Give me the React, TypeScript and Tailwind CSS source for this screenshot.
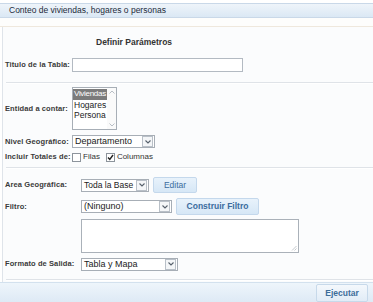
import React from "react";

const font = { fontFamily: '"Liberation Sans", Arial, sans-serif' };

function Chevron() {
  return (
    <span className="flex h-[11px] w-[11px] shrink-0 items-center justify-center border border-[#b9c0c8] bg-[#f4f6f8]">
      <svg width="6" height="4" viewBox="0 0 6 4">
        <path d="M0.5 0.5 L3 3 L5.5 0.5" fill="none" stroke="#56606b" strokeWidth="1.1" />
      </svg>
    </span>
  );
}

function Select({ value, width, text = "text-[9px]" }: { value: string; width: string; text?: string }) {
  return (
    <div
      className={`flex h-[13px] items-center justify-between border border-[#a7aeb6] bg-white pl-[2px] pr-[1px] leading-none text-[#222] ${text} ${width}`}
    >
      <span className="whitespace-nowrap">{value}</span>
      <Chevron />
    </div>
  );
}

function Label({ children, w }: { children: React.ReactNode; w: string }) {
  return (
    <span
      className={`shrink-0 whitespace-nowrap pl-[2px] text-[7.5px] font-bold leading-none tracking-[0.1px] text-[#3a3a3a] ${w}`}
    >
      {children}
    </span>
  );
}

function Sep() {
  return <div className="ml-[3px] h-[2px] border-t border-[#dfe3e8] bg-white" />;
}

function Check({ checked }: { checked?: boolean }) {
  return (
    <span className="flex h-[9px] w-[9px] items-center justify-center border border-[#8d949c] bg-white">
      {checked && (
        <svg width="7" height="7" viewBox="0 0 7 7">
          <path d="M1 3.5 L2.8 5.5 L6 1" fill="none" stroke="#222" strokeWidth="1.4" />
        </svg>
      )}
    </span>
  );
}

export default function App() {
  return (
    <div className="h-[302px] w-[373px] overflow-hidden bg-white" style={font}>
      <div className="pt-[3px]">
        <div className="flex h-[15px] items-center border-y border-[#c9d8e8] bg-gradient-to-b from-[#eef4fa] to-[#dbe8f4] pl-[9px] text-[8.5px] text-[#1d2b3a]">
          Conteo de viviendas, hogares o personas
        </div>
      </div>
      <div className="h-[9px] border-b border-[#efe8dd] bg-[#fdfdfc]" />

      <div className="ml-[2px] h-[255px] border-l border-[#dfe4ea] bg-[#fbfcfd]">
        <div className="h-[8px]" />
        <div className="flex h-[14px] items-center pl-[93px] text-[8.5px] font-bold text-[#333]">
          Definir Parámetros
        </div>

        <div className="mt-[9px] flex h-[14px] items-center">
          <Label w="w-[69px]">Titulo de la Tabla:</Label>
          <div className="h-[14px] w-[171px] border border-[#b3bac2] bg-white" />
        </div>

        <div className="mt-[10px]">
          <Sep />
        </div>

        <div className="mt-[3px] flex h-[43px] items-center">
          <Label w="w-[69px]">Entidad a contar:</Label>
          <div className="flex h-[43px] w-[45px] border border-[#a7aeb6] bg-white">
            <div className="flex w-[34px] flex-col pt-[1px] text-[8.5px] leading-[10.5px] text-[#222]">
              <span className="w-[34px] whitespace-nowrap bg-[#7b7b7b] pl-[1px] text-[8px] tracking-[-0.3px] text-white">
                Viviendas
              </span>
              <span className="whitespace-nowrap pl-[1px]">Hogares</span>
              <span className="whitespace-nowrap pl-[1px]">Persona</span>
            </div>
            <div className="flex w-[9px] flex-col items-center justify-between bg-[#fafafa] py-[2px]">
              <svg width="6" height="4" viewBox="0 0 6 4">
                <path d="M0.5 3.5 L3 1 L5.5 3.5" fill="none" stroke="#b8bec5" strokeWidth="1" />
              </svg>
              <svg width="6" height="4" viewBox="0 0 6 4">
                <path d="M0.5 0.5 L3 3 L5.5 0.5" fill="none" stroke="#b8bec5" strokeWidth="1" />
              </svg>
            </div>
          </div>
        </div>

        <div className="mt-[5px] flex h-[13px] items-center">
          <Label w="w-[69px]">Nivel Geográfico:</Label>
          <Select value="Departamento" width="w-[83px]" />
        </div>

        <div className="mt-[4px] flex h-[10px] items-center">
          <Label w="w-[69px]">Incluir Totales de:</Label>
          <Check />
          <span className="ml-[2px] mr-[6px] text-[8px] text-[#333]">Filas</span>
          <Check checked />
          <span className="ml-[2px] text-[8px] text-[#333]">Columnas</span>
        </div>

        <div className="mt-[5px]">
          <Sep />
        </div>

        <div className="mt-[8px] flex h-[16px] items-center">
          <Label w="w-[78px]">Area Geográfica:</Label>
          <Select value="Toda la Base" width="w-[68px]" text="text-[8.5px]" />
          <button className="ml-[4px] h-[16px] w-[44px] rounded-[2px] border border-[#c4d8ec] bg-gradient-to-b from-[#e8f2fb] to-[#d6e7f6] text-[8.5px] text-[#3b6c9e]">
            Editar
          </button>
        </div>

        <div className="mt-[5px] flex h-[17px] items-center">
          <Label w="w-[78px]">Filtro:</Label>
          <Select value="(Ninguno)" width="w-[91px]" />
          <button className="ml-[4px] h-[17px] w-[83px] rounded-[2px] border border-[#c4d8ec] bg-gradient-to-b from-[#e8f2fb] to-[#d6e7f6] text-[8.5px] font-bold text-[#3b6c9e]">
            Construir Filtro
          </button>
        </div>

        <div className="mt-[4px] flex h-[34px]">
          <div className="w-[78px] shrink-0" />
          <div className="relative h-[34px] w-[218px] border border-[#aab1b9] bg-white">
            <svg className="absolute bottom-[1px] right-[1px]" width="6" height="6" viewBox="0 0 6 6">
              <path d="M1 5.5 L5.5 1 M3.5 5.5 L5.5 3.5" stroke="#b5bbc2" strokeWidth="0.8" />
            </svg>
          </div>
        </div>

        <div className="mt-[5px] flex h-[12px] items-center">
          <Label w="w-[78px]">Formato de Salida:</Label>
          <Select value="Tabla y Mapa" width="w-[97px]" />
        </div>

        <div className="mt-[9px]">
          <Sep />
        </div>
      </div>

      <div className="flex h-[21px] items-center justify-end border-t border-[#d3e1ee] bg-gradient-to-b from-[#eef5fb] to-[#dde9f5] pr-[5px]">
        <button className="h-[18px] w-[52px] rounded-[2px] border border-[#c7d9ea] bg-gradient-to-b from-[#f4f8fc] to-[#e1ecf7] text-[8.5px] font-bold text-[#3d6d9b]">
          Ejecutar
        </button>
      </div>
    </div>
  );
}
